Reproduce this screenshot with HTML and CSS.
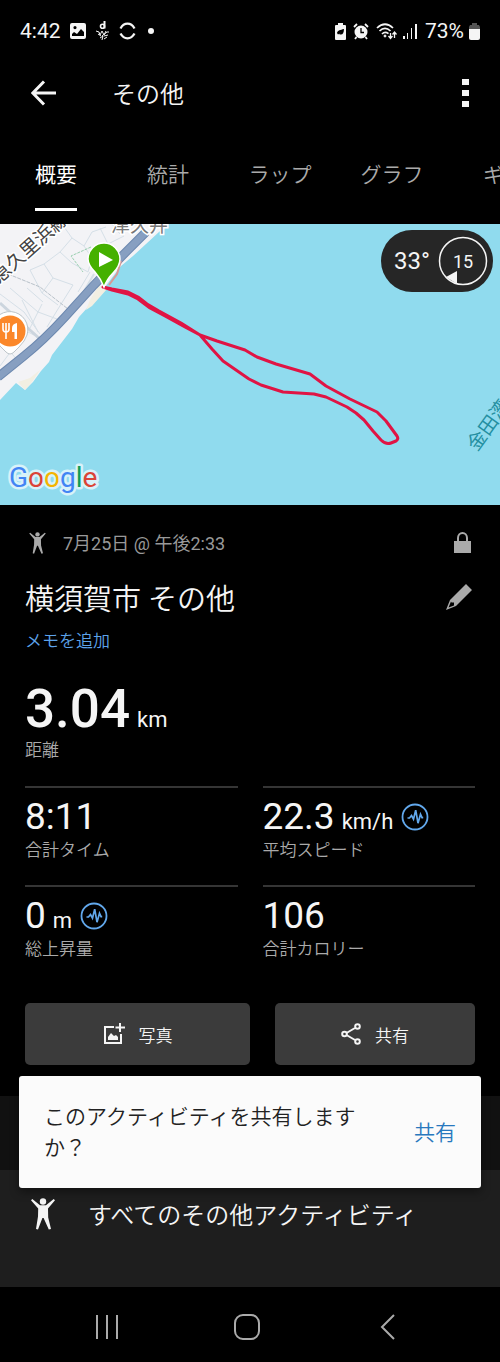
FILE: index.html
```html
<!DOCTYPE html>
<html lang="ja">

<head>
    <meta charset="utf-8">
    <meta name="viewport" content="width=device-width, initial-scale=1">
    <title>その他</title>
    <link rel="stylesheet" href="styles.css">
</head>

<body>
    <!-- Shared icons -->
    <svg class="sprite" aria-hidden="true">
        <symbol id="person" viewBox="0 0 24 32">
            <circle cx="12" cy="3.5" r="3.2" />
            <path d="M0 2.2 1.3 1 9 7.3h6L22.7 1 24 2.2l-7 8.3.2 9L20 31l-2.2.6L12.600 20h-1.200L7 31.600 5 31l2-12.500.2-8z" />
        </symbol>
        <symbol id="pulse" viewBox="0 0 28 28">
            <circle cx="14" cy="14" r="12.500" fill="none" stroke="currentColor" stroke-width="1.800" />
            <path d="M6.500 15h2l2-2.500 2 3.700 2.200-9 2.300 13 2.500-9 1.500 3.500h1.200" fill="none" stroke="currentColor" stroke-width="1.700" />
        </symbol>
    </svg>

    <div class="status-bar">
        <div class="status-group">
            <span>4:42</span>
            <svg width="16" height="16" viewBox="0 0 16 16">
                <path fill="currentColor" fill-rule="evenodd" d="M2 0h12a2 2 0 0 1 2 2v12a2 2 0 0 1-2 2H2a2 2 0 0 1-2-2V2a2 2 0 0 1 2-2zM2 13h12V9l-3-3-4 5-3-2-2 2zM5 3a1.600 1.600 0 1 0 0 3.200A1.600 1.600 0 0 0 5 3z" />
            </svg>
            <svg class="doodle" width="15" height="20" viewBox="0 0 15 20" fill="none" stroke="currentColor">
                <path d="M9.500 0v7.500" stroke-width="2" />
                <circle cx="7.500" cy="5.300" r="2" stroke-width="1.600" />
                <path d="M1 10l3 1 1 3 2-4 2 4 2-4M3 13l3 2M7 15l5-4 2 0M9 15l4-1M5 17l3-2-1 4M9 18l3-2" />
            </svg>
            <svg width="17" height="18" viewBox="0 0 17 18" fill="none" stroke="currentColor" stroke-width="2.300">
                <path d="M1.500 6.500C5 .1 12 .1 15.500 6.500M1.500 11.500C5 17.900 12 17.900 15.500 11.500" />
            </svg>
            <span class="status-dot"></span>
        </div>
        <div class="status-group status-right">
            <svg width="11" height="17" viewBox="0 0 11 17">
                <path fill="currentColor" fill-rule="evenodd" d="M3 0h5v2h2a1 1 0 0 1 1 1v13a1 1 0 0 1-1 1H1a1 1 0 0 1-1-1V3a1 1 0 0 1 1-1h2zM2 10c1-3 3-3 7-4-.2 5-2 6.500-5 5l3-2-4 2.500z" />
            </svg>
            <svg width="16" height="17" viewBox="0 0 16 17">
                <circle cx="8" cy="9" r="6.500" fill="currentColor" />
                <path d="M1 4l3-3M15 4l-3-3M3.500 14 2 16M12.500 14l1.500 2" stroke="currentColor" stroke-width="1.800" />
                <path d="M8 5v4.500h3" fill="none" stroke="#000" stroke-width="1.300" />
            </svg>
            <svg width="22" height="17" viewBox="0 0 22 17" fill="none" stroke="currentColor">
                <path d="M1 5q8-7.500 16 0M3.500 8q5.500-5.500 11 0M6 11q3-3 6.500-.3" stroke-width="1.700" />
                <circle cx="9" cy="13" r="1" fill="currentColor" />
                <path d="M14.500 10v5M12.500 13l2 2.500 2-2.500M18.500 15V9M16.500 11.500l2-2.500 2 2.500" stroke-width="1.300" />
            </svg>
            <svg width="14" height="16" viewBox="0 0 14 16" fill="currentColor">
                <path d="M0 13h2v3H0zM4 10h1v6H4zM8 5h1v11H8zM12 1h2v15h-2z" />
            </svg>
            <span class="battery-text">73%</span>
            <svg width="11" height="17" viewBox="0 0 11 17">
                <path fill="#555" d="M3 0h5v2h2l1 2v3H0V4l1-2h2z" />
                <path fill="currentColor" d="M0 6h11v9a2 2 0 0 1-2 2H2a2 2 0 0 1-2-2z" />
            </svg>
        </div>
    </div>

    <header class="app-bar">
        <button class="icon-button" aria-label="戻る">
            <svg width="26" height="26" viewBox="0 0 26 26" fill="none" stroke="currentColor" stroke-width="3">
                <path d="M25 13H3M13 1.500 1.800 13 13 24.500" />
            </svg>
        </button>
        <h1>その他</h1>
        <button class="icon-button" aria-label="メニュー">
            <svg width="7" height="28" viewBox="0 0 7 28" fill="currentColor">
                <path d="M0 0h7v6H0zM0 11h7v6H0zM0 22h7v6H0z" />
            </svg>
        </button>
    </header>

    <nav class="tabs">
        <a class="tab active" href="#summary">概要</a>
        <a class="tab" href="#stats">統計</a>
        <a class="tab" href="#laps">ラップ</a>
        <a class="tab" href="#graphs">グラフ</a>
        <a class="tab" href="#gear">ギア</a>
    </nav>

    <main>
        <section class="map">
            <svg class="map-canvas" viewBox="0 0 500 281" preserveAspectRatio="xMidYMid slice">
                <path fill="#f3f3f6" d="M0 0H168L159 8 146 20 133 32 121 42 108 59 99 71 88 83 79 93 72 105 62 118 52 131 49 138 41 147 33 158 25 166 16 159 0 176z" />
                <path fill="#f2efe2" d="M99 61l8 4-15 17-6 4 4-10zM40 146l-8 12-7 8-7-8 12-4z" />
                <!-- streets -->
                <g fill="none" stroke="#d5dfe7" stroke-width="1">
                    <path d="M62 0l10 14 12 8 8-14 14-5M72 14 60 28l12 11 16 9M60 28 44 40l9 14 20 7M84 22l8 12-4 14M44 40 30 46l12 23M27 64l16 14M53 54 42 69l16 12M90 48 78 68M73 61 58 85 47 103M30 104l12-24M22 76l16 32M0 70l24 18 16 22M0 142l26-35 8 4M10 64l28 24 19 7M0 92l20 10M18 137l-10-12M100 4l8 16 16-8M112 0l8 10" />
                    <path d="M58 100 80 74 94 50" stroke-width="2" />
                    <path d="M0 79l41 37" stroke="#ccd5de" stroke-width="3" />
                </g>
                <path fill="none" stroke="#b8c1c9" stroke-dasharray="4 1" d="M8 50l32 13 28 22" />
                <path fill="none" stroke="#9bd0b1" stroke-dasharray="3 1" d="M91 23 71 32l12 16" />
                <!-- coastal road -->
                <path fill="none" stroke="#6c88af" stroke-width="9" d="M146 8 123 31 94 61 65 93Q44 116 24 132L-2 153" />
                <path fill="none" stroke="#879fc1" stroke-width="7" d="M146 8 123 31 94 61 65 93Q44 116 24 132L-2 153" />
                <text class="map-label rail" transform="translate(-2 61) rotate(-42)" x="-18">京急久里浜線</text>
                <text class="map-label town" x="111" y="8">津久井</text>
                <text class="map-label bay" transform="translate(477 228) rotate(-54)">金田湾</text>
                <!-- restaurant marker -->
                <path fill="#fff" stroke="#bcc4c9" d="M-8 108a18 18 0 1 1 35 3q-2 6-8 12l-5 5q-4 4-8 0l-6-6z" />
                <circle cx="10" cy="107" r="15.500" fill="#fb8729" />
                <path fill="none" stroke="#fff" stroke-width="1.600" d="M3 99v6q0 3 3 3t3-3v-6M6 99v16" />
                <path fill="#fff" d="M17 115h-2.500v-7H12v-4q0-4 5-5z" />
                <!-- track -->
                <path class="track" d="M103 63l9 3 16 4 10 5 12 9 15 8 20 11 15 8 17 6 28 9 12 7 19 7 34 10 16 12 24 13 27 13 9 9 11 15q2 3-1 5l-5 2q-5 2-10-3l-8-9-9-11-8-7-9-6-21-10-12-3-31-2-22-7-12-6-26-18-11-12-12-14-19-12-22-12-12-7-9-7-10-5-16-3z" />
                <path fill="none" stroke="#d89894" stroke-width="2" d="M109 61l8-11 4-13" />
                <path fill="#45b000" stroke="#fff" stroke-width="1.500" d="M104 63Q101 55 95 48 88 41 88 35a16 16 0 1 1 32 0q0 7-7 14-6 6-9 14z" />
                <path fill="#fff" d="M99 28l14 8-14 7z" />
                <text class="google" x="9" y="263"><tspan fill="#4285f4">G</tspan><tspan fill="#db4437">o</tspan><tspan fill="#f4b400">o</tspan><tspan fill="#4285f4">g</tspan><tspan fill="#0f9d58">l</tspan><tspan fill="#db4437">e</tspan></text>
            </svg>
            <div class="weather">
                <span>33°</span>
                <svg width="50" height="50" viewBox="0 0 50 50">
                    <circle cx="25" cy="25" r="23.500" fill="none" stroke="#f5f5f5" stroke-width="1.500" />
                    <path fill="#f5f5f5" d="M8 41l11-6v13z" />
                    <text class="wind" x="25" y="32">15</text>
                </svg>
            </div>
        </section>

        <section class="summary" id="summary">
            <div class="row date-row">
                <svg class="muted-icon" width="17" height="22"><use href="#person" /></svg>
                <span class="date">7月25日 @ 午後2:33</span>
                <svg class="muted-icon" width="17" height="22" viewBox="0 0 17 22">
                    <path fill="currentColor" d="M0 9h17v12H0z" />
                    <path fill="none" stroke="currentColor" stroke-width="2" d="M4 10V6a4.500 5 0 0 1 9 0v4" />
                </svg>
            </div>
            <div class="row title-row">
                <h2>横須賀市 その他</h2>
                <button class="icon-button muted-icon" aria-label="編集">
                    <svg width="26" height="26" viewBox="0 0 26 26">
                        <path fill="currentColor" fill-rule="evenodd" d="M20 0l6 6-16 16-10 4 4-10zM5 17.500 2.500 23.500l5.500-2v-3H5.500z" />
                    </svg>
                </button>
            </div>
            <a class="memo" href="#memo">メモを追加</a>

            <div class="distance">
                <div class="value"><strong>3.04</strong> <small>km</small></div>
                <div class="label">距離</div>
            </div>

            <div class="stats">
                <div class="stat">
                    <div class="value">8:11</div>
                    <div class="label">合計タイム</div>
                </div>
                <div class="stat">
                    <div class="value">22.3 <small>km/h</small><svg class="pulse" width="28" height="28"><use href="#pulse" /></svg></div>
                    <div class="label">平均スピード</div>
                </div>
                <div class="stat">
                    <div class="value">0 <small>m</small><svg class="pulse" width="28" height="28"><use href="#pulse" /></svg></div>
                    <div class="label">総上昇量</div>
                </div>
                <div class="stat">
                    <div class="value">106</div>
                    <div class="label">合計カロリー</div>
                </div>
            </div>

            <div class="actions">
                <button class="action photo">
                    <svg width="22" height="22" viewBox="0 0 22 22">
                        <path fill="none" stroke="currentColor" stroke-width="2" d="M11 4H2v16h16v-9M17 0v9M12.500 4.500H22" />
                        <path fill="currentColor" d="M5 17v-3l3-4 3 3 2-1 2 2v3z" />
                    </svg>
                    写真
                </button>
                <button class="action share">
                    <svg width="20" height="22" viewBox="0 0 20 22" fill="none" stroke="currentColor" stroke-width="2">
                        <path d="M5.500 10 14 5M5.500 12l8.500 5" />
                        <circle cx="3.500" cy="11" r="2.300" />
                        <circle cx="16.500" cy="3.500" r="2.300" />
                        <circle cx="16.500" cy="18.500" r="2.300" />
                    </svg>
                    共有
                </button>
            </div>
        </section>

        <section class="more">
            <div class="more-header"></div>
            <a class="more-link" href="#all">
                <svg width="24" height="32"><use href="#person" /></svg>
                すべてのその他アクティビティ
            </a>
            <div class="snackbar" role="status">
                <p>このアクティビティを共有しますか？</p>
                <button>共有</button>
            </div>
        </section>
    </main>

    <footer class="nav-bar">
        <button aria-label="履歴">
            <svg width="24" height="26" viewBox="0 0 24 26" stroke="currentColor" stroke-width="2">
                <path d="M2 1v24M12 1v24M22 1v24" />
            </svg>
        </button>
        <button aria-label="ホーム">
            <svg width="26" height="26" viewBox="0 0 26 26" fill="none" stroke="currentColor" stroke-width="2">
                <rect x="1" y="1" width="24" height="24" rx="8" />
            </svg>
        </button>
        <button aria-label="戻る">
            <svg width="26" height="26" viewBox="0 0 26 26" fill="none" stroke="currentColor" stroke-width="2">
                <path d="M19 1 7 13l12 12" />
            </svg>
        </button>
    </footer>
</body>

</html>
```
FILE: styles.css
```css
* {
    box-sizing: border-box;
}

body {
    margin: 0;
    min-height: 100vh;
    display: flex;
    flex-direction: column;
    overflow-x: hidden;
    background: #000;
    color: #f5f5f5;
    font-family: Roboto, "Noto Sans CJK JP", sans-serif;
    font-weight: 350;
}

h1,
h2,
p {
    margin: 0;
    font-weight: 350;
}

button {
    padding: 0;
    border: none;
    background: none;
    color: inherit;
    font: inherit;
}

a {
    color: inherit;
    text-decoration: none;
}

svg {
    flex: none;
    fill: currentColor;
}

svg[fill="none"] {
    fill: none;
}

.sprite {
    display: none;
}

/* Status bar */
.status-bar {
    display: flex;
    justify-content: space-between;
    height: 62px;
    padding: 0 20px;
    font-size: 21px;
    font-weight: 400;
}

.status-group {
    display: flex;
    align-items: center;
    gap: 9px;
}

.status-dot {
    width: 6px;
    height: 6px;
    margin-left: 3px;
    border-radius: 50%;
    background: #f5f5f5;
}

.status-right {
    gap: 5px;
}

.status-right svg:first-child,
.status-right svg:nth-child(2) {
    margin-right: 2px;
}

.battery-text {
    margin-left: 3px;
}

/* App bar */
.app-bar {
    display: flex;
    align-items: center;
    height: 62px;
    padding: 0 31px;
}

.app-bar h1 {
    flex: 1;
    margin-left: 55px;
    padding-bottom: 2px;
    font-size: 24px;
}

.icon-button {
    display: flex;
}

/* Tabs */
.tabs {
    display: flex;
    height: 100px;
    overflow: hidden;
}

.tab {
    flex: 0 0 112px;
    display: flex;
    flex-direction: column;
    align-items: center;
    justify-content: space-between;
    padding: 36px 0 13px;
    color: #aaa;
    font-size: 21px;
    line-height: 31px;
}

.tab.active {
    color: #fff;
    font-weight: 400;
}

.tab.active::after {
    content: "";
    width: 42px;
    height: 3px;
    background: #fff;
}

/* Map */
.map {
    position: relative;
    background: #90dbee;
}

.map-canvas {
    display: block;
    width: 100%;
    height: 281px;
}

.map-label {
    font-size: 19px;
    font-weight: 400;
    paint-order: stroke;
    stroke: #fff;
    stroke-width: 3px;
}

.rail {
    fill: #444;
}

.town {
    fill: #777;
}

.bay {
    fill: #238fa1;
    stroke: none;
}

.track {
    fill: none;
    stroke: #e01444;
    stroke-width: 3px;
    stroke-linejoin: round;
}

.google {
    font-size: 28px;
    font-weight: 400;
    paint-order: stroke;
    stroke: #d8f2f9;
    stroke-width: 5px;
    stroke-linejoin: round;
}

.weather {
    position: absolute;
    top: 6px;
    right: 7px;
    display: flex;
    align-items: center;
    gap: 8px;
    height: 62px;
    padding: 0 5px 0 13px;
    border-radius: 31px;
    background: #262626;
    font-size: 24px;
    font-weight: 400;
}

.wind {
    font-size: 18px;
    text-anchor: middle;
}

/* Summary */
.summary {
    padding: 23px 25px 31px;
}

.row {
    display: flex;
    align-items: center;
}

.muted-icon {
    color: #aaa;
}

.date-row {
    height: 30px;
    padding: 0 4px;
}

.date {
    flex: 1;
    margin-left: 17px;
    padding-bottom: 3px;
    color: #999;
    font-size: 18px;
    font-weight: 400;
}

.title-row {
    justify-content: space-between;
    height: 78px;
    padding-right: 3px;
}

.title-row h2 {
    font-size: 29px;
}

.memo {
    display: block;
    margin-top: -9px;
    color: #5da3ea;
    font-size: 17px;
    line-height: 28px;
}

.value {
    display: flex;
    align-items: baseline;
    gap: 7px;
    height: 44px;
    font-size: 37px;
    font-weight: 400;
    line-height: 44px;
}

.value small {
    font-size: 22px;
}

.value strong {
    font-size: 53px;
    font-weight: 500;
}

.label {
    color: #aaa;
    font-size: 17px;
    line-height: 22px;
}

.distance {
    height: 131px;
    padding-top: 24px;
}

.distance .value {
    height: 60px;
    line-height: 60px;
}

.stats {
    display: grid;
    grid-template-columns: 1fr 1fr;
    column-gap: 25px;
}

.stat {
    height: 99px;
    padding-top: 7px;
    border-top: 2px solid #353535;
}

.pulse {
    align-self: center;
    margin-left: 1px;
    color: #62a8ec;
}

.actions {
    display: flex;
    gap: 25px;
    margin-top: 19px;
}

.action {
    display: flex;
    align-items: center;
    justify-content: center;
    gap: 14px;
    height: 62px;
    border-radius: 5px;
    background: #3b3b3b;
    font-size: 17px;
}

.photo {
    flex: 9;
}

.share {
    flex: 8;
}

/* Related activities */
.more {
    position: relative;
}

.more-header {
    height: 74px;
    background: #111;
}

.more-link {
    display: flex;
    align-items: center;
    gap: 33px;
    height: 117px;
    padding: 0 31px 30px;
    background: #1e1e1e;
    font-size: 24px;
}

.snackbar {
    position: absolute;
    top: -20px;
    left: 19px;
    right: 19px;
    display: flex;
    align-items: center;
    justify-content: space-between;
    gap: 40px;
    padding: 26px 25px 24px;
    border-radius: 3px;
    background: #fbfbfb;
    box-shadow: 0 4px 10px rgba(0, 0, 0, 0.4);
    color: #222;
    font-size: 21px;
    line-height: 31px;
}

.snackbar button {
    flex: none;
    color: #2878be;
}

/* System navigation */
.nav-bar {
    display: flex;
    align-items: center;
    justify-content: space-around;
    height: 75px;
    padding: 4px 41px 0 37px;
    color: #aaa;
}

.nav-bar button {
    display: flex;
}
```
